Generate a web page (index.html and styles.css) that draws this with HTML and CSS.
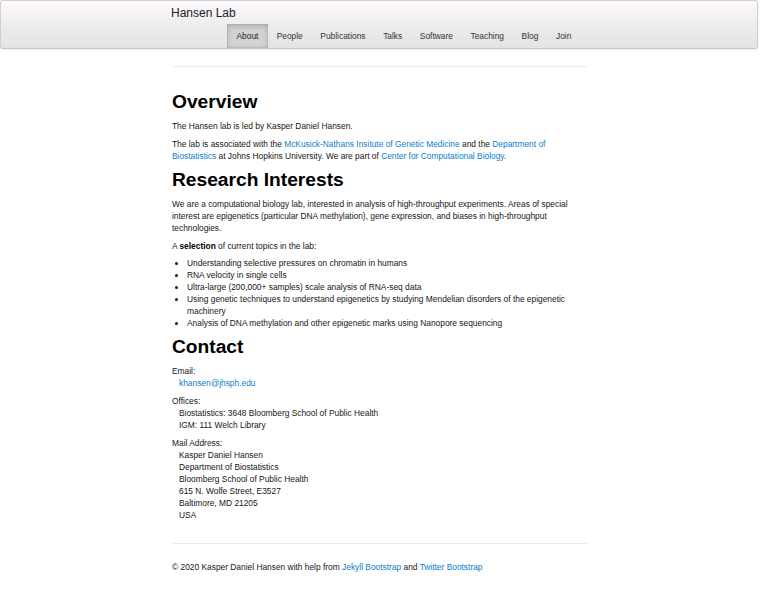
FILE: index.html
```html
<!DOCTYPE html>
<html lang="en">
<head>
<meta charset="utf-8">
<title>Hansen Lab</title>
<link rel="stylesheet" href="styles.css">
</head>
<body>
<div class="navbar">
  <div class="navbar-inner">
    <div class="container">
      <a class="brand" href="#">Hansen Lab</a>
      <ul class="nav">
        <li class="active"><a href="#">About</a></li>
        <li><a href="#">People</a></li>
        <li><a href="#">Publications</a></li>
        <li><a href="#">Talks</a></li>
        <li><a href="#">Software</a></li>
        <li><a href="#">Teaching</a></li>
        <li><a href="#">Blog</a></li>
        <li><a href="#">Join</a></li>
      </ul>
    </div>
  </div>
</div>

<div class="container main">
  <hr class="rule top">
  <h1>Overview</h1>
  <p>The Hansen lab is led by Kasper Daniel Hansen.</p>
  <p>The lab is associated with the <a href="#">McKusick-Nathans Insitute of Genetic Medicine</a> and the <a href="#">Department of Biostatistics</a> at Johns Hopkins University. We are part of <a href="#">Center for Computational Biology</a>.</p>

  <h1>Research Interests</h1>
  <p>We are a computational biology lab, interested in analysis of high-throughput experiments. Areas of special interest are epigenetics (particular DNA methylation), gene expression, and biases in high-throughput technologies.</p>
  <p>A <strong>selection</strong> of current topics in the lab:</p>
  <ul class="topics">
    <li>Understanding selective pressures on chromatin in humans</li>
    <li>RNA velocity in single cells</li>
    <li>Ultra-large (200,000+ samples) scale analysis of RNA-seq data</li>
    <li>Using genetic techniques to understand epigenetics by studying Mendelian disorders of the epigenetic machinery</li>
    <li>Analysis of DNA methylation and other epigenetic marks using Nanopore sequencing</li>
  </ul>

  <h1>Contact</h1>
  <dl class="contact">
    <dt>Email:</dt>
    <dd><a href="#">khansen@jhsph.edu</a></dd>
  </dl>
  <dl class="contact">
    <dt>Offices:</dt>
    <dd>Biostatistics: 3648 Bloomberg School of Public Health</dd>
    <dd>IGM: 111 Welch Library</dd>
  </dl>
  <dl class="contact">
    <dt>Mail Address:</dt>
    <dd>Kasper Daniel Hansen</dd>
    <dd>Department of Biostatistics</dd>
    <dd>Bloomberg School of Public Health</dd>
    <dd>615 N. Wolfe Street, E3527</dd>
    <dd>Baltimore, MD 21205</dd>
    <dd>USA</dd>
  </dl>

  <hr class="rule bottom">
  <footer class="footer">
    <p>&copy; 2020 Kasper Daniel Hansen with help from <a href="#">Jekyll Bootstrap</a> and <a href="#">Twitter Bootstrap</a></p>
  </footer>
</div>
</body>
</html>
```

FILE: styles.css
```css
html, body {
  margin: 0;
  padding: 0;
  background: #ffffff;
}

body {
  font-family: "Liberation Sans", Arial, Helvetica, sans-serif;
  font-size: 8.4px;
  line-height: 12px;
  color: #161616;
}

a {
  color: #0a7dcc;
  text-decoration: none;
}

.container {
  width: 416px;
  margin: 0 auto;
}

/* Navbar */
.navbar-inner {
  margin: 0 2px 0 0;
  border: 1px solid #cfcfcf;
  border-bottom-color: #c4c4c4;
  border-radius: 3px;
  background: linear-gradient(to bottom, #ffffff 0%, #fcf4fb 12%, #f3f3f3 30%, #ececec 55%, #e3e3e3 100%);
  box-shadow: 0 1px 3px rgba(0, 0, 0, 0.08);
}

.navbar .container {
  display: flex;
  flex-direction: column;
}

.brand {
  display: block;
  height: 23px;
  line-height: 25px;
  font-size: 12px;
  color: #222222;
}

.nav {
  display: flex;
  list-style: none;
  margin: 0 0 0 56px;
  padding: 0;
  height: 24px;
}

.nav a {
  display: block;
  height: 24px;
  line-height: 24px;
  padding: 0 8.8px;
  font-size: 8.4px;
  color: #333333;
}

.nav .active a {
  padding: 0 9.5px;
  background: #d3d3d3;
  color: #222222;
  box-shadow: inset 0 2px 6px rgba(0, 0, 0, 0.18), inset 0 0 0 1px rgba(0, 0, 0, 0.06);
}

/* Main */
.rule {
  border: 0;
  border-top: 1px solid #ececec;
  height: 0;
}

.rule.top {
  margin: 17px 0 23px;
}

.rule.bottom {
  margin: 22px 0 0;
}

h1 {
  font-size: 19.2px;
  line-height: 24px;
  font-weight: bold;
  color: #000000;
  margin: 6px 0;
}

p {
  margin: 0 0 6px;
}

strong {
  color: #000000;
}

.topics {
  margin: -1px 0 3px;
  padding-left: 15px;
}

.contact {
  margin: 0 0 6px;
}

.contact dt {
  font-weight: normal;
}

.contact dd {
  margin-left: 7px;
}

.footer p {
  margin: 17px 0 0;
}
```
